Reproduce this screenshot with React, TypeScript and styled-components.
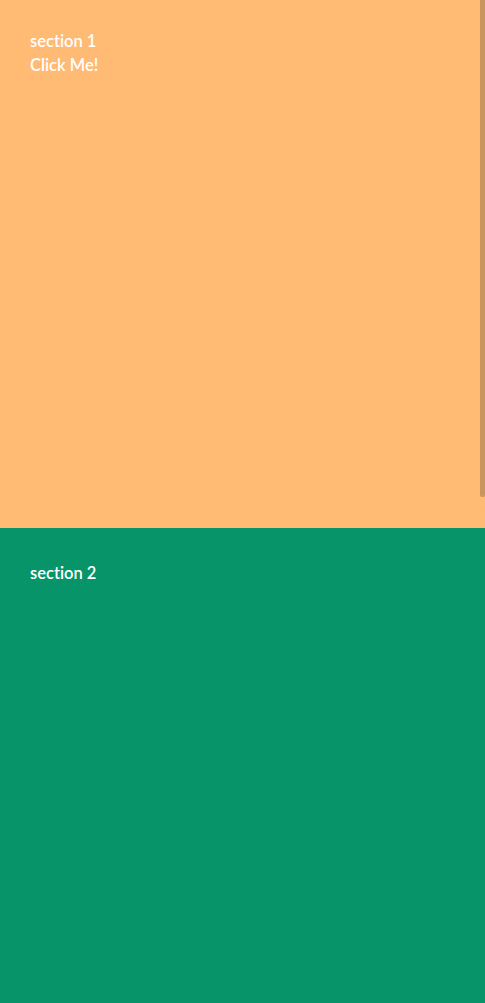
import React from "react";
import styled, { createGlobalStyle } from "styled-components";

const GlobalStyle = createGlobalStyle`
    html, body {
        margin: 0;
        padding: 0;
        overflow: hidden;
    }
    body {
        font-family: Lato, "Open Sans", sans-serif;
    }
`;

const Page = styled.main`
    display: flex;
    flex-direction: column;
    height: 1003px;
`;

const Section = styled.section<{ $bg: string; $height?: number; $top: number }>`
    display: flex;
    flex-direction: column;
    align-items: flex-start;
    padding: ${(p) => p.$top}px 30px 30px;
    box-sizing: border-box;
    background-color: ${(p) => p.$bg};
    color: #ffffff;
    font-size: 16.5px;
    font-weight: 600;
    line-height: 24px;
    font-variant-ligatures: none;
    ${(p) => (p.$height ? `height: ${p.$height}px;` : "flex: 1;")}
`;

const Title = styled.div``;

const ClickButton = styled.button`
    padding: 0;
    border: none;
    background: none;
    color: inherit;
    font: inherit;
    font-variant-ligatures: none;
    cursor: pointer;
`;

const ScrollThumb = styled.div`
    position: fixed;
    top: 0;
    right: 0;
    width: 5px;
    height: 497px;
    border-radius: 0 0 2px 2px;
    background-color: #c8955e;
`;

export default function App() {
    return (
        <>
            <GlobalStyle />
            <Page>
                <Section $bg="#ffba73" $height={528} $top={29}>
                    <Title>section 1</Title>
                    <ClickButton type="button">Click Me!</ClickButton>
                </Section>
                <Section $bg="#079469" $top={33}>
                    <Title>section 2</Title>
                </Section>
            </Page>
            <ScrollThumb />
        </>
    );
}
